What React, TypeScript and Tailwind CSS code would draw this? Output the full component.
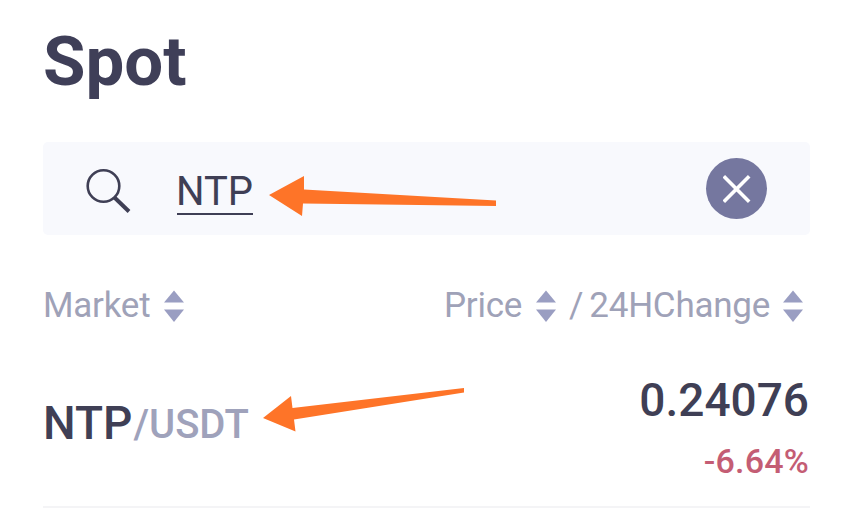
const SortIcon = ({ className = "" }: { className?: string }) => (
  <svg className={`w-5 h-[32px] shrink-0 ${className}`} viewBox="0 0 20 32" fill="#9a9ec2">
    <path d="M10 0.5L20 12.5H0z" />
    <path d="M0 19.5H20L10 32z" />
  </svg>
);

const SearchBar = () => {
  return (
    <section className="relative flex items-center h-[93px] w-[767px] rounded-[5px] bg-[#f8f9fd] pl-[42px] pr-[43px]">
      <svg className="w-[46px] h-[46px] mt-1" viewBox="0 0 46 46" fill="none" stroke="#3f3f55">
        <circle cx="18.5" cy="18" r="15.8" strokeWidth="2.6" />
        <path d="M29.5 29.5L44 43.5" strokeWidth="4" />
      </svg>
      <div className="ml-[46px] mt-[6px] h-[46px] border-b-2 border-[#3f3f55]">
        <p className="-ml-px text-[40px] leading-[46px] text-[#3f3f55]">NTP</p>
      </div>
      <button className="ml-auto flex items-center justify-center w-[61px] h-[61px] rounded-full bg-[#75779f]">
        <svg className="w-[28px] h-[28px]" viewBox="0 0 28 28" stroke="#ffffff" strokeWidth="3.6">
          <path d="M0.8 1.3L26.2 26.7M26.2 1.3L0.8 26.7" />
        </svg>
      </button>
      <svg className="absolute left-[225px] top-[33px] w-[229px] h-[42px]" viewBox="0 0 229 42" fill="#fe7428">
        <path d="M1 20L36 1V14.5L228 25.5V31L35 28.5L34 41z" />
      </svg>
    </section>
  );
};

const App = () => {
  return (
    <main className="w-[844px] h-[519px] overflow-hidden bg-white font-['Roboto',sans-serif] pl-[43px] pt-[26px]">
      <h1 className="text-[69px] leading-[72px] font-bold text-[#3f3f58]">Spot</h1>
      <div className="mt-11">
        <SearchBar />
      </div>
      <div className="flex items-center w-[760px] h-10 mt-[51px] text-[35px] leading-10 tracking-[-0.25px] text-[#9fa2b8]">
        <span>Market</span>
        <SortIcon className="ml-[14px]" />
        <span className="ml-auto">Price</span>
        <SortIcon className="ml-[14px]" />
        <span className="ml-[13px]">/</span>
        <span className="ml-[6px]">24HChange</span>
        <SortIcon className="ml-[13px]" />
      </div>
      <section className="relative flex justify-between w-[767px] h-[182px] border-b-2 border-[#f4f4f6] font-medium">
        <div className="flex items-start mt-[69px] h-[56px] leading-[56px]">
          <span className="text-[46px] text-[#3f3f55]">NTP</span>
          <span className="ml-px mt-0.5 text-[40px] text-[#9fa2bb]">/USDT</span>
        </div>
        <div className="flex flex-col items-end pt-12 pr-px">
          <p className="text-[46px] leading-[52px] text-[#3f3f55]">0.24076</p>
          <p className="mt-[15px] text-[34px] leading-[40px] tracking-[0.2px] text-[#c45d74]">-6.64%</p>
        </div>
        <svg className="absolute left-[219px] top-[61px] w-[203px] h-[46px]" viewBox="0 0 203 46" fill="#fe7428">
          <path d="M1 31L29 9L30.5 21L202 1V5.5L32 32.5L33.5 44.5z" />
        </svg>
      </section>
    </main>
  );
};

export default App;
